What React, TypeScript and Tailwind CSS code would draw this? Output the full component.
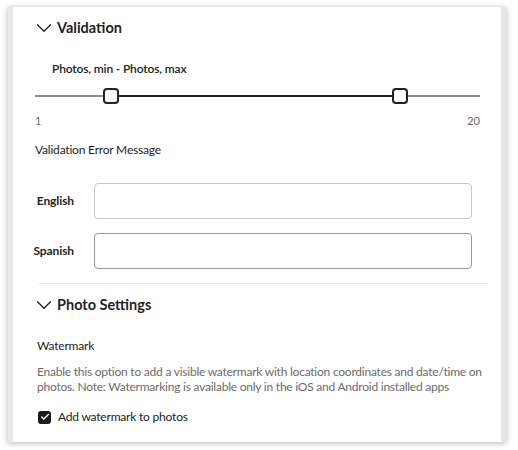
import { ChevronDown, Check } from 'lucide-react'

function SectionHeader({ title }: { title: string }) {
  return (
    <div className="flex h-[20px] items-center pl-[18px]">
      <ChevronDown size={26} strokeWidth={1.2} className="shrink-0 text-[#1f1f1f]" />
      <span className="text-[14.5px] font-bold leading-[20px] text-[#1f1f1f]">{title}</span>
    </div>
  )
}

function Thumb() {
  return <div className="h-[16px] w-[16px] shrink-0 rounded-[4px] border-2 border-[#222] bg-[#fafafa]" />
}

function LangInput({ label, border }: { label: string; border: string }) {
  return (
    <div className="flex items-center">
      <span className="w-[61px] text-right text-[12px] font-bold tracking-[-0.1px] text-[#222]">{label}</span>
      <div className={`ml-[20px] h-[36px] w-[378px] rounded-[4px] border ${border} bg-white`} />
    </div>
  )
}

export default function App() {
  return (
    <div className="h-[450px] w-[518px] bg-white pl-[8px] pt-[7px]" style={{ fontFamily: 'Lato, sans-serif' }}>
      <div className="flex h-[435px] w-[498px] shadow-[0_1px_6px_rgba(0,0,0,0.3)]">
        <div className="w-[5px] bg-[#e6e6e6]" />
        <div className="flex-1 bg-white pt-[11px]">
          <SectionHeader title="Validation" />
          <div className="mt-[23px] pl-[39px] text-[12px] font-semibold leading-[16px] tracking-[-0.15px] text-[#222]">Photos, min - Photos, max</div>
          <div className="mt-[11px] ml-[22px] flex w-[445px] items-center">
            <div className="h-[2px] w-[68px] bg-[#8a8a8a]" />
            <Thumb />
            <div className="h-[2px] flex-1 bg-[#222]" />
            <Thumb />
            <div className="h-[2px] w-[72px] bg-[#8a8a8a]" />
          </div>
          <div className="mt-[10px] ml-[22px] flex w-[445px] justify-between text-[11px] leading-[14px] text-[#666]">
            <span>1</span>
            <span>20</span>
          </div>
          <div className="mt-[14px] pl-[22px] text-[12px] leading-[16px] tracking-[-0.2px] text-[#222]">Validation Error Message</div>
          <div className="mt-[25px] flex flex-col gap-[14px]">
            <LangInput label="English" border="border-[#c8c8c8]" />
            <LangInput label="Spanish" border="border-[#9a9a9a]" />
          </div>
          <div className="mt-[14px] ml-[26px] h-[1px] w-[449px] bg-[#e8e8e8]" />
          <div className="mt-[11px]">
            <SectionHeader title="Photo Settings" />
          </div>
          <div className="mt-[23px] pl-[24px] text-[12px] leading-[16px] tracking-[-0.2px] text-[#222]">Watermark</div>
          <p className="mt-[10px] pl-[24px] pr-[4px] text-[12px] leading-[15px] tracking-[-0.23px] text-[#6b6b6b]">
            Enable this option to add a visible watermark with location coordinates and date/time on photos. Note: Watermarking is available only in the iOS and Android installed apps
          </p>
          <div className="mt-[15px] flex h-[16px] items-center gap-[7px] pl-[25px]">
            <div className="flex h-[13px] w-[13px] items-center justify-center rounded-[3px] bg-[#1a1a1a]">
              <Check size={10} strokeWidth={3.5} className="text-white" />
            </div>
            <span className="text-[12px] tracking-[-0.2px] text-[#222]">Add watermark to photos</span>
          </div>
        </div>
        <div className="w-[5px] bg-[#e6e6e6]" />
      </div>
    </div>
  )
}
